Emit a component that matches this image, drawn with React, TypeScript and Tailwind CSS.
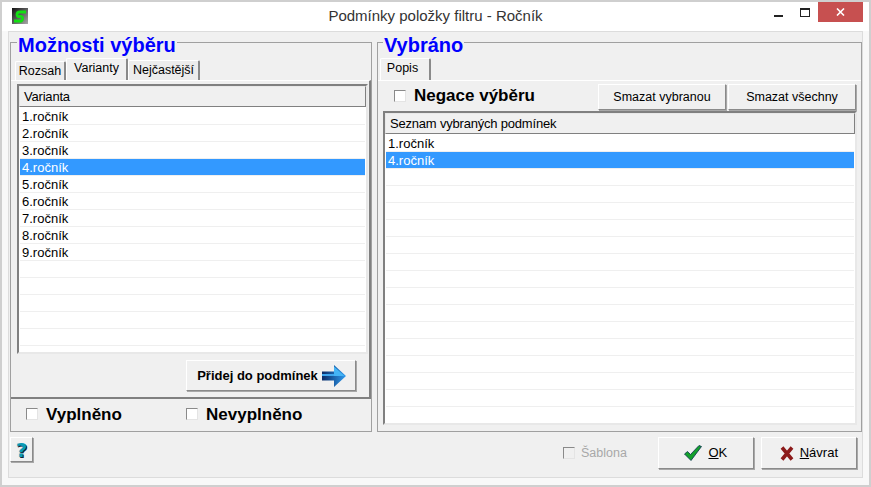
import { ReactNode } from "react";

const FONT = "font-['Liberation_Sans',Arial,sans-serif]";
const RAISED =
  "border border-t-white border-l-white border-r-[#8a8a8a] border-b-[#8a8a8a] bg-[#f0f0f0] shadow-[1px_1px_0_#a8a8a8]";

function Check({ disabled }: { disabled?: boolean }) {
  return (
    <span
      className={`inline-block h-[12px] w-[12px] shrink-0 border border-t-[#8a8a8a] border-l-[#8a8a8a] border-r-[#e4e4e4] border-b-[#e4e4e4] ${
        disabled ? "bg-[#f0f0f0]" : "bg-white"
      }`}
    />
  );
}

function Rows({ items, count, selected, height }: { items: string[]; count: number; selected: number; height: number }) {
  return (
    <div className="flex-1 overflow-hidden bg-white px-[1px] pt-[1px]">
      {Array.from({ length: count }).map((_, i) => (
        <div
          key={i}
          style={{ height }}
          className={`flex items-center border-b border-[#efefef] pl-[2px] text-[13px] leading-none ${
            i === selected ? "bg-[#3399ff] text-white" : "text-black"
          }`}
        >
          {items[i] ?? ""}
        </div>
      ))}
    </div>
  );
}

function ListBox({ title, className, children }: { title: string; className: string; children: ReactNode }) {
  return (
    <div className={`flex flex-col border-2 border-t-[#808080] border-l-[#808080] border-r-[#e8e8e8] border-b-[#e8e8e8] bg-white ${className}`}>
      <div className="flex h-[21px] shrink-0 items-center border border-t-[#e8e8e8] border-l-[#e8e8e8] border-r-[#808080] border-b-[#808080] bg-[#f0f0f0] pl-[4px] text-[13px] tracking-[-0.2px] text-black">
        {title}
      </div>
      {children}
    </div>
  );
}

function Tab({ label, active, className }: { label: string; active?: boolean; className: string }) {
  return (
    <div
      className={`flex items-center justify-center rounded-t-[2px] border-t border-l border-t-white border-l-white border-r-2 border-r-[#8a8a8a] text-[12.5px] text-black ${
        active ? "bg-[#f0f0f0] pb-[3px]" : "bg-[#ececec]"
      } ${className}`}
    >
      {label}
    </div>
  );
}

const grades = ["1.ročník", "2.ročník", "3.ročník", "4.ročník", "5.ročník", "6.ročník", "7.ročník", "8.ročník", "9.ročník"];

export default function App() {
  return (
    <div className={`flex h-[487px] w-[871px] flex-col overflow-hidden border-2 border-[#cfcfcf] bg-[#f8f8f8] ${FONT}`}>
      {/* title bar */}
      <div className="relative flex h-[29px] shrink-0 items-center justify-center bg-white text-[15px] text-[#333]">
        <svg className="absolute left-[10px] top-[6px]" width="16" height="16" viewBox="0 0 16 16">
          <defs>
            <linearGradient id="logoBg" x1="0" y1="0" x2="1" y2="1">
              <stop offset="0" stopColor="#111" />
              <stop offset="1" stopColor="#aaa" />
            </linearGradient>
          </defs>
          <rect width="16" height="16" fill="url(#logoBg)" />
          <path d="M14 4H8Q5 4 5 6.500T8 8.500t2.500 2.500T7 13H2" fill="none" stroke="#12e012" strokeWidth="2.800" />
        </svg>
        <span>Podmínky položky filtru - Ročník</span>
        <div className="absolute right-0 top-0 flex items-start">
          <svg className="mr-[17px] mt-[12px]" width="9" height="3"><rect width="9" height="2" y="1" fill="#222" /></svg>
          <svg className="mr-[8px] mt-[6px]" width="10" height="10"><rect x=".5" y=".5" width="9" height="8" fill="none" stroke="#222" /><rect width="10" height="2" fill="#222" /></svg>
          <div className="mr-[6px] flex h-[20px] w-[45px] items-center justify-center bg-[#c75050]">
            <svg width="9" height="8" viewBox="0 0 9 8"><path d="M1 0.500l7 7M8 0.500l-7 7" stroke="#fff" strokeWidth="1.600" /></svg>
          </div>
        </div>
      </div>

      {/* dialog */}
      <div className="mx-[6px] mb-[7px] flex flex-1 flex-col border border-[#dcdcdc] bg-[#f0f0f0] px-[1px]">
        <div className="mt-[10px] flex gap-[5px]">
          {/* left group */}
          <div className="relative flex h-[390px] w-[362px] shrink-0 flex-col border border-[#a0a0a0]">
            <span className="absolute -top-[9px] left-[6px] bg-[#f0f0f0] px-[1px] text-[20px] font-bold leading-[22px] text-[#0000ff]">
              Možnosti výběru
            </span>
            <div className="ml-[4px] mt-[15px] flex h-[22px] items-end">
              <Tab label="Rozsah" className="h-[19px] w-[51px]" />
              <Tab label="Varianty" active className="h-[22px] w-[62px]" />
              <Tab label="Nejčastější" className="h-[20px] w-[72px]" />
            </div>
            <div className="flex h-[319px] flex-col border-t border-r-2 border-b-2 border-t-white border-r-[#808080] border-b-[#808080] pl-[1px]">
              <div className="ml-[5px] mt-[3px] w-[351px]">
                <ListBox title="Varianta" className="h-[270px]">
                  <Rows items={grades} count={15} selected={3} height={17} />
                </ListBox>
              </div>
              <div className="mr-[13px] mt-[6px] flex justify-end">
                <div className={`flex h-[31px] w-[170px] items-center justify-center gap-[4px] pl-[1px] text-[13px] font-bold text-black ${RAISED}`}>
                  Přidej do podmínek
                  <svg width="24" height="22" viewBox="0 0 24 22">
                    <defs>
                      <linearGradient id="arrowStem" x1="0" y1="0" x2="1" y2="0">
                        <stop offset="0" stopColor="#0a2a66" />
                        <stop offset="1" stopColor="#2f9cf0" />
                      </linearGradient>
                    </defs>
                    <path d="M0 6.500h12V0l12 11-12 11v-6.500H0z" fill="url(#arrowStem)" />
                    <path d="M12 1.500L22.500 11 12 11z" fill="#45b4f5" />
                    <path d="M0 9h12v2H0z" fill="#3ea6ee" />
                  </svg>
                </div>
              </div>
            </div>
            <div className="flex h-[30px] items-center text-[17px] font-bold leading-none text-black">
              <span className="ml-[15px] flex w-[160px] items-center gap-[8px]"><Check />Vyplněno</span>
              <span className="flex items-center gap-[8px]"><Check />Nevyplněno</span>
            </div>
          </div>

          {/* right group */}
          <div className="relative flex h-[390px] w-[485px] shrink-0 flex-col border border-[#a0a0a0]">
            <span className="absolute -top-[9px] left-[5px] bg-[#f0f0f0] px-[1px] text-[20px] font-bold leading-[22px] text-[#0000ff]">
              Vybráno
            </span>
            <div className="ml-[2px] mt-[15px] flex h-[22px] items-end">
              <Tab label="Popis" active className="h-[22px] w-[51px] pr-[5px]" />
            </div>
            <div className="flex flex-1 flex-col border-t border-t-white pl-[5px]">
              <div className="flex h-[30px] items-start">
                <span className="ml-[11px] mt-[6px] flex items-center gap-[8px] text-[17px] font-bold leading-none text-black">
                  <Check />Negace výběru
                </span>
                <div className="ml-auto mr-[5px] mt-[3px] flex gap-[2px]">
                  <div className={`flex h-[26px] w-[128px] items-center justify-center text-[12.5px] text-black ${RAISED}`}>Smazat vybranou</div>
                  <div className={`flex h-[26px] w-[128px] items-center justify-center text-[12.5px] text-black ${RAISED}`}>Smazat všechny</div>
                </div>
              </div>
              <ListBox title="Seznam vybraných podmínek" className="h-[314px] w-[474px]">
                <Rows items={["1.ročník", "4.ročník"]} count={17} selected={1} height={17} />
              </ListBox>
            </div>
          </div>
        </div>

        {/* footer */}
        <div className="mt-[5px] flex items-start">
          <div className={`flex h-[25px] w-[23px] items-center justify-center font-['DejaVu_Sans',sans-serif] text-[20px] font-bold leading-none text-[#0a9ab5] [text-shadow:1px_1px_0_#123] ${RAISED}`}>?</div>
          <span className="ml-[530px] mt-[10px] flex items-center gap-[6px] text-[12.5px] leading-none text-[#a8a8a8]">
            <Check disabled />Šablona
          </span>
          <div className={`ml-[31px] flex h-[32px] w-[96px] items-center justify-center gap-[6px] text-[13px] text-black ${RAISED}`}>
            <svg width="18" height="16" viewBox="0 0 18 16"><path d="M0.500 9l3-2.500 3 3L15 0.500l2.500 1L7 15.500z" fill="#14a02c" stroke="#0b3050" strokeWidth=".8" /></svg>
            <span><span className="underline">O</span>K</span>
          </div>
          <div className={`ml-[7px] flex h-[32px] w-[96px] items-center justify-center gap-[6px] text-[13px] text-black ${RAISED}`}>
            <svg width="14" height="15" viewBox="0 0 14 15"><path d="M2 1.500l10 12M12 1.500l-10 12" stroke="#8c1a1a" strokeWidth="3.600" /></svg>
            <span><span className="underline">N</span>ávrat</span>
          </div>
        </div>
      </div>
    </div>
  );
}
